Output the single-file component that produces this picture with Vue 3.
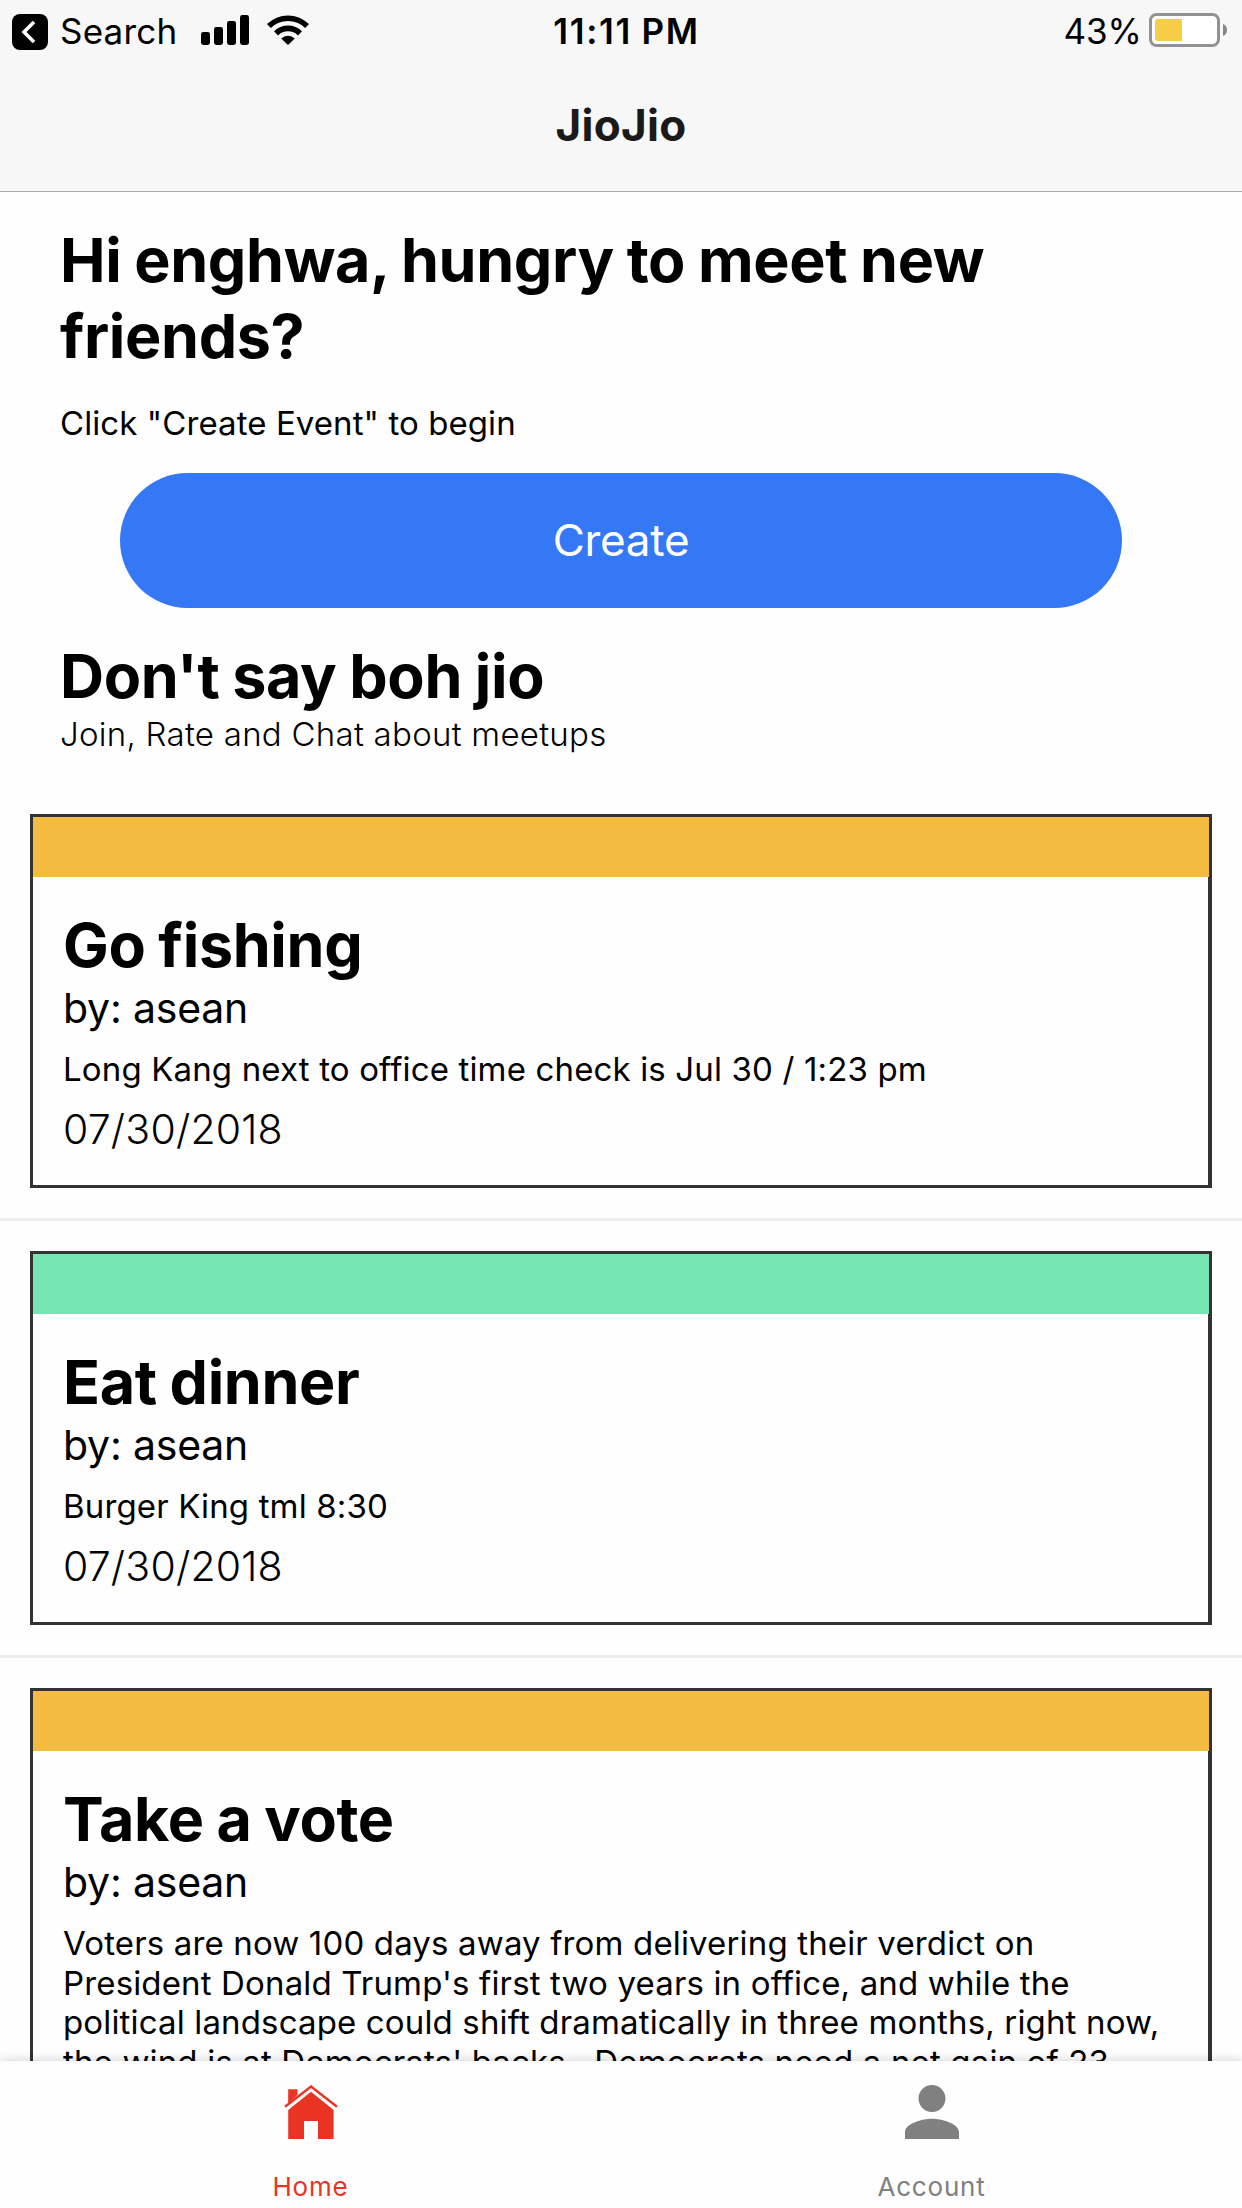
<script setup>
const events = [
  {
    title: 'Go fishing',
    host: 'asean',
    details: ['Long Kang next to office time check is Jul 30 / 1:23 pm'],
    date: '07/30/2018',
    tone: 'amber',
  },
  {
    title: 'Eat dinner',
    host: 'asean',
    details: ['Burger King tml 8:30'],
    date: '07/30/2018',
    tone: 'mint',
  },
  {
    title: 'Take a vote',
    host: 'asean',
    details: [
      'Voters are now 100 days away from delivering their verdict on',
      "President Donald Trump's first two years in office, and while the",
      'political landscape could shift dramatically in three months, right now,',
      "the wind is at Democrats' backs.  Democrats need a net gain of 23",
    ],
    date: '07/30/2018',
    tone: 'amber',
  },
]
</script>

<template>
  <div class="screen">
    <header class="header">
      <div class="status">
        <div class="status-left">
          <svg class="back" viewBox="0 0 36 36">
            <rect width="36" height="36" rx="8" />
            <path d="M22 8 L12 18 L22 28" fill="none" stroke="#fff" stroke-width="3.6" />
          </svg>
          <span class="search">Search</span>
          <svg class="signal" viewBox="0 0 48 30">
            <rect x="0" y="17" width="9" height="13" rx="2.4" />
            <rect x="13" y="12" width="9" height="18" rx="2.4" />
            <rect x="26" y="6" width="9" height="24" rx="2.4" />
            <rect x="39" y="0" width="9" height="30" rx="2.4" />
          </svg>
          <svg class="wifi" viewBox="0 0 42 30">
            <path d="M0 9 A30 30 0 0 1 42 9 L38.2 13 A24.6 24.6 0 0 0 3.8 13 Z" />
            <path d="M7 16.3 A20 20 0 0 1 35 16.3 L31 20.4 A14.3 14.3 0 0 0 11 20.4 Z" />
            <path d="M14.2 23.4 A9.8 9.8 0 0 1 27.8 23.4 L21 30 Z" />
          </svg>
        </div>
        <div class="clock">11:11 PM</div>
        <div class="status-right">
          <span class="percent">43%</span>
          <svg class="battery" viewBox="0 0 78 34">
            <rect x="1.5" y="1.5" width="68" height="31" rx="6" fill="#fff" stroke="#929292" stroke-width="3" />
            <path d="M33 6 H9 a3 3 0 0 0 -3 3 V25 a3 3 0 0 0 3 3 H33 Z" fill="#f7cd46" />
            <path d="M74 11 Q78 12.5 78 17 Q78 21.5 74 23 Z" fill="#868686" />
          </svg>
        </div>
      </div>
      <div class="title">JioJio</div>
    </header>

    <main class="content">
      <section class="intro">
        <h1 class="heading">Hi enghwa, hungry to meet new<br />friends?</h1>
        <p class="hint">Click "Create Event" to begin</p>
        <button class="create">Create</button>
        <h2 class="heading sub">Don't say boh jio</h2>
        <p class="tagline">Join, Rate and Chat about meetups</p>
      </section>

      <div v-for="event in events" :key="event.title" class="row">
        <article class="card">
          <div class="bar" :class="event.tone"></div>
          <div class="body">
            <h3 class="heading">{{ event.title }}</h3>
            <p class="host">by: {{ event.host }}</p>
            <p class="details">
              <span v-for="line in event.details" :key="line" class="line">{{ line }}</span>
            </p>
            <p class="date">{{ event.date }}</p>
          </div>
        </article>
      </div>
    </main>

    <nav class="tabs">
      <a class="tab active">
        <svg class="icon" viewBox="0 0 54 54">
          <path d="M4.2 19 V4.3 H13.5 V9.8 Z" />
          <path d="M27 6.7 L49.6 25 V54 H34 V36 H20 V54 H4.2 V25 Z" />
          <path d="M1 21.7 L27 1.5 L53 21.7" fill="none" stroke="currentColor" stroke-width="2.4" />
        </svg>
        <span class="label">Home</span>
      </a>
      <a class="tab">
        <svg class="icon" viewBox="4 4 16 16">
          <path d="M12 12c2.21 0 4-1.79 4-4s-1.79-4-4-4-4 1.79-4 4 1.79 4 4 4zm0 2c-2.67 0-8 1.34-8 4v2h16v-2c0-2.66-5.33-4-8-4z" />
        </svg>
        <span class="label">Account</span>
      </a>
    </nav>
  </div>
</template>

<style>
body {
  margin: 0;
}
</style>

<style scoped>
.screen {
  width: 1242px;
  height: 2208px;
  overflow: hidden;
  display: flex;
  flex-direction: column;
  background: #fefefe;
  color: #000;
  font-family: Inter, "Liberation Sans", sans-serif;
}

h1, h2, h3, p {
  margin: 0;
  font-weight: 400;
}

svg {
  display: block;
  flex: none;
}

.header {
  height: 191px;
  flex: none;
  background: #f7f7f7;
  border-bottom: 1px solid #a7a7a7;
}

.status {
  height: 62px;
  display: grid;
  grid-template-columns: 1fr auto 1fr;
  font-size: 35px;
  line-height: 62px;
}

.status-left,
.status-right {
  display: flex;
  align-items: flex-start;
}

.status-left {
  padding-left: 12px;
}

.status-right {
  justify-content: flex-end;
  padding-right: 15px;
}

.back {
  width: 36px;
  height: 36px;
  margin-top: 14px;
}

.search {
  width: 153px;
  padding-left: 12px;
  box-sizing: border-box;
  letter-spacing: 0.2px;
}

.signal {
  width: 48px;
  height: 30px;
  margin-top: 15px;
}

.wifi {
  width: 42px;
  height: 30px;
  margin: 15px 0 0 18px;
}

.clock {
  padding-left: 11px;
  font-weight: 600;
  letter-spacing: 1.7px;
  word-spacing: -1px;
}

.battery {
  width: 78px;
  height: 34px;
  margin: 13px 0 0 7px;
}

.title {
  margin-top: 38px;
  font-size: 44px;
  font-weight: 700;
  line-height: 50px;
  letter-spacing: 0.3px;
  text-align: center;
  color: #1a1a1a;
}

.content {
  flex: 1;
  min-height: 0;
  overflow: hidden;
}

.intro {
  padding: 30px 60px 60px;
}

.heading {
  font-size: 61px;
  font-weight: 700;
  line-height: 72px;
  letter-spacing: -0.35px;
  word-spacing: -1.3px;
  white-space: nowrap;
}

h1.heading {
  line-height: 76px;
}

.hint,
.tagline {
  font-size: 33px;
  line-height: 40px;
}

.hint {
  margin-top: 29px;
  letter-spacing: 0.08px;
}

.create {
  display: block;
  width: 1002px;
  height: 135px;
  margin: 30px auto 0;
  padding: 0 0 2px;
  border: 0;
  border-radius: 68px;
  background: #3478f6;
  color: #fff;
  font-family: inherit;
  font-size: 44px;
  letter-spacing: -0.3px;
}

.sub {
  margin-top: 32px;
}

.tagline {
  margin-top: 2px;
  font-weight: 300;
  letter-spacing: 0.27px;
}

.row {
  padding: 0 30px 30px;
  border-bottom: 3px solid #ededed;
  margin-bottom: 30px;
}

.card {
  border: 3px solid #333;
}

.bar {
  height: 60px;
}

.amber {
  background: #f4bb41;
}

.mint {
  background: #76e6b4;
}

.body {
  padding: 32px 0 31px 30px;
  border-right: 1px solid #333;
}

.host,
.date {
  font-size: 41px;
  line-height: 50px;
}

.host {
  margin-top: 2px;
  letter-spacing: -0.2px;
}

.details {
  margin-top: 17px;
  font-size: 33px;
  line-height: 39.67px;
  letter-spacing: 0.15px;
}

.line {
  display: block;
  white-space: pre;
}

.date {
  margin-top: 14.33px;
  font-weight: 300;
  letter-spacing: 0.2px;
}

.tabs {
  position: relative;
  height: 147px;
  flex: none;
  display: flex;
  background: #fefefe;
  box-shadow: 0 0 10px rgba(0, 0, 0, 0.2);
}

.tab {
  flex: 1;
  display: flex;
  flex-direction: column;
  align-items: center;
  padding-top: 24px;
  color: #808080;
}

.active {
  color: #eb3323;
}

.icon {
  width: 54px;
  height: 54px;
  fill: currentColor;
}

.label {
  margin-top: 32px;
  font-size: 26px;
  line-height: 32px;
  letter-spacing: 0.8px;
}
</style>
